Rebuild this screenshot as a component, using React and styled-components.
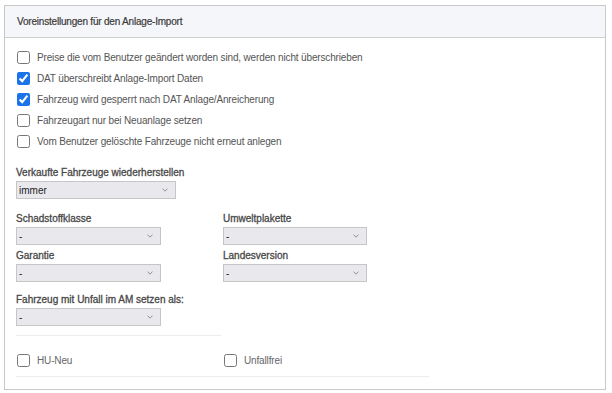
import React from "react";
import styled, { createGlobalStyle } from "styled-components";

const GlobalStyle = createGlobalStyle`
  body {
    margin: 0;
    background: #ffffff;
    font-family: "Liberation Sans", Arial, sans-serif;
  }
`;

const Page = styled.div`
  padding: 5px 6px 4px 4px;
`;

const Panel = styled.section`
  border: 1px solid #c9c9c9;
  background: #fff;
`;

const PanelHeader = styled.header`
  height: 31px;
  display: flex;
  align-items: center;
  padding: 0 12px;
  background: #f5f6fa;
  border-bottom: 1px solid #cfcfcf;
  font-size: 10px;
  letter-spacing: -0.2px;
  color: #3a3a3a;
  -webkit-text-stroke: 0.2px #3a3a3a;
`;

const PanelBody = styled.div`
  padding: 9px 11px 12px;
`;

const CheckList = styled.div`
  display: flex;
  flex-direction: column;
`;

const CheckRow = styled.label`
  display: flex;
  align-items: center;
  gap: 7px;
  height: 21px;
  padding-left: 1px;
  font-size: 10px;
  letter-spacing: -0.15px;
  color: ${(p) => (p.$muted ? "#666" : "#555")};
`;

const Box = styled.input.attrs({ type: "checkbox" })`
  width: 13px;
  height: 13px;
  margin: 0;
  accent-color: #1a73e8;
`;

const Field = styled.div`
  display: flex;
  flex-direction: column;
  margin-top: ${(p) => p.$top || 0}px;
`;

const FieldLabel = styled.div`
  font-size: 10px;
  line-height: 13px;
  color: #484848;
  -webkit-text-stroke: 0.3px #484848;
  margin-bottom: 2px;
`;

const SelectWrap = styled.div`
  position: relative;
  width: ${(p) => p.$width}px;
  height: 18px;
`;

const Select = styled.select`
  display: block;
  appearance: none;
  width: 100%;
  height: 18px;
  margin: 0;
  padding: 0 16px 0 2px;
  border: 1px solid #c6c6c6;
  border-radius: 0;
  background: #e9e9ed;
  font-family: "Liberation Sans", Arial, sans-serif;
  font-size: 10px;
  color: #222;
`;

const Chevron = styled.svg`
  position: absolute;
  right: 8px;
  top: 7px;
  pointer-events: none;
`;

const Grid = styled.div`
  display: grid;
  grid-template-columns: 207px 207px;
  row-gap: 4px;
  margin-top: ${(p) => p.$top || 0}px;
`;

const Rule = styled.hr`
  width: ${(p) => p.$width}px;
  margin: ${(p) => p.$top}px 0 0;
  border: 0;
  border-top: 1px solid #ececec;
`;

const FlagRow = styled.div`
  display: grid;
  grid-template-columns: 207px 207px;
  margin-top: ${(p) => p.$top}px;
`;

function Dropdown({ width, value }) {
  return (
    <SelectWrap $width={width}>
      <Select defaultValue={value}>
        <option>{value}</option>
      </Select>
      <Chevron width="6" height="4" viewBox="0 0 6 4">
        <path d="M0.5 0.6 L3 3.2 L5.5 0.6" fill="none" stroke="#888" strokeWidth="0.9" />
      </Chevron>
    </SelectWrap>
  );
}

const options = [
  { text: "Preise die vom Benutzer geändert worden sind, werden nicht überschrieben", checked: false },
  { text: "DAT überschreibt Anlage-Import Daten", checked: true },
  { text: "Fahrzeug wird gesperrt nach DAT Anlage/Anreicherung", checked: true },
  { text: "Fahrzeugart nur bei Neuanlage setzen", checked: false },
  { text: "Vom Benutzer gelöschte Fahrzeuge nicht erneut anlegen", checked: false },
];

export default function App() {
  return (
    <>
      <GlobalStyle />
      <Page>
        <Panel>
          <PanelHeader>Voreinstellungen für den Anlage-Import</PanelHeader>
          <PanelBody>
            <CheckList>
              {options.map((o) => (
                <CheckRow key={o.text}>
                  <Box defaultChecked={o.checked} />
                  {o.text}
                </CheckRow>
              ))}
            </CheckList>

            <Field $top={14}>
              <FieldLabel>Verkaufte Fahrzeuge wiederherstellen</FieldLabel>
              <Dropdown width={160} value="immer" />
            </Field>

            <Grid $top={13}>
              <Field>
                <FieldLabel>Schadstoffklasse</FieldLabel>
                <Dropdown width={145} value="-" />
              </Field>
              <Field>
                <FieldLabel>Umweltplakette</FieldLabel>
                <Dropdown width={144} value="-" />
              </Field>
              <Field>
                <FieldLabel>Garantie</FieldLabel>
                <Dropdown width={145} value="-" />
              </Field>
              <Field>
                <FieldLabel>Landesversion</FieldLabel>
                <Dropdown width={144} value="-" />
              </Field>
            </Grid>

            <Field $top={11}>
              <FieldLabel>Fahrzeug mit Unfall im AM setzen als:</FieldLabel>
              <Dropdown width={145} value="-" />
            </Field>

            <Rule $width={205} $top={9} />

            <FlagRow $top={14}>
              <CheckRow $muted>
                <Box />
                HU-Neu
              </CheckRow>
              <CheckRow $muted>
                <Box />
                Unfallfrei
              </CheckRow>
            </FlagRow>

            <Rule $width={413} $top={5} />
          </PanelBody>
        </Panel>
      </Page>
    </>
  );
}
